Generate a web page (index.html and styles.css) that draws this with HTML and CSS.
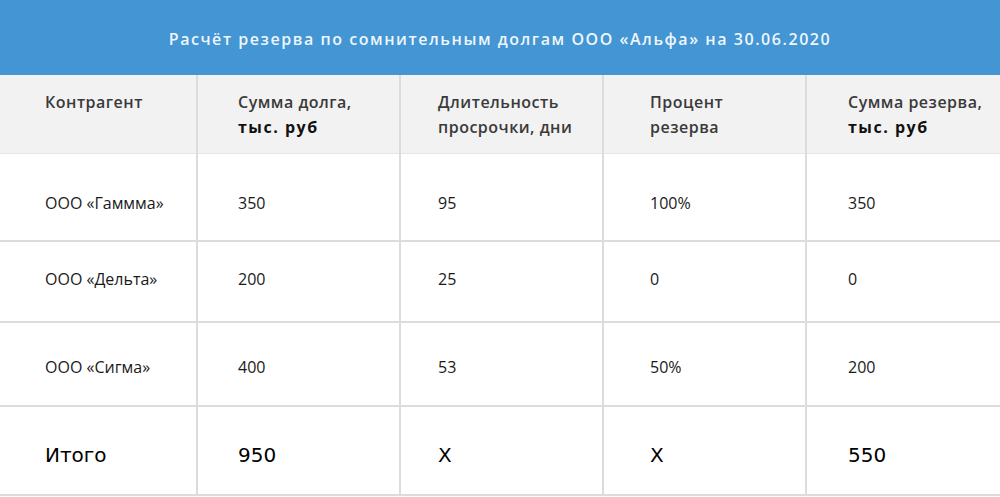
FILE: index.html
```html
<!DOCTYPE html>
<html lang="ru">
<head>
<meta charset="utf-8">
<link rel="stylesheet" href="styles.css">
</head>
<body>
<div class="title">Расчёт резерва по сомнительным долгам ООО «Альфа» на 30.06.2020</div>
<table class="grid">
  <colgroup>
    <col class="c1"><col class="c2"><col class="c3"><col class="c4"><col class="c5">
  </colgroup>
  <thead>
    <tr class="head">
      <th class="p1">Контрагент</th>
      <th class="p2">Сумма долга,<br><span class="unit">тыс. руб</span></th>
      <th class="p3">Длительность<br>просрочки, дни</th>
      <th class="p4">Процент<br>резерва</th>
      <th class="p5">Сумма резерва,<br><span class="unit">тыс. руб</span></th>
    </tr>
  </thead>
  <tbody>
    <tr class="r1">
      <td class="p1">ООО «Гаммма»</td><td class="p2">350</td><td class="p3">95</td><td class="p4">100%</td><td class="p5">350</td>
    </tr>
    <tr class="r2">
      <td class="p1">ООО «Дельта»</td><td class="p2">200</td><td class="p3">25</td><td class="p4">0</td><td class="p5">0</td>
    </tr>
    <tr class="r3">
      <td class="p1">ООО «Сигма»</td><td class="p2">400</td><td class="p3">53</td><td class="p4">50%</td><td class="p5">200</td>
    </tr>
    <tr class="total">
      <td class="p1">Итого</td><td class="p2">950</td><td class="p3">X</td><td class="p4">X</td><td class="p5">550</td>
    </tr>
  </tbody>
</table>
</body>
</html>
```
FILE: styles.css
```css
html, body {
  margin: 0;
  padding: 0;
  background: #ffffff;
}
body {
  font-family: "Open Sans", "Noto Sans", sans-serif;
  width: 1000px;
  overflow: hidden;
}
.title {
  height: 75px;
  background: #4395d3;
  color: #eef6fc;
  font-size: 16px;
  font-weight: 600;
  letter-spacing: 1.55px;
  text-align: center;
  line-height: 78px;
}
.grid {
  width: 1000px;
  border-collapse: collapse;
  table-layout: fixed;
}
.c1 { width: 197px; }
.c2 { width: 203px; }
.c3 { width: 203px; }
.c4 { width: 203px; }
.c5 { width: 194px; }
.grid th, .grid td {
  text-align: left;
  padding-top: 0;
  padding-bottom: 0;
  padding-right: 0;
  border-left: 2px solid #dcdcdc;
  border-bottom: 2px solid #dcdcdc;
}
.grid th:first-child, .grid td:first-child {
  border-left: none;
}
.p1 { padding-left: 45px; }
.p2 { padding-left: 40px; }
.p3 { padding-left: 37px; }
.p4 { padding-left: 46px; }
.p5 { padding-left: 41px; }
.head th {
  background: #f2f2f2;
  height: 78px;
  vertical-align: top;
  padding-top: 15px;
  box-sizing: border-box;
  font-size: 16px;
  font-weight: 600;
  letter-spacing: 0.5px;
  line-height: 25px;
  color: #3a3a3a;
  border-bottom-width: 1px;
  border-bottom-color: #e6e6e6;
}
.head th .unit {
  color: #111111;
  font-weight: 700;
  letter-spacing: 1.5px;
}
.grid td {
  font-size: 16px;
  color: #1a1a1a;
  vertical-align: middle;
}
.r1 td { height: 88px; padding-top: 12px; box-sizing: border-box; }
.r2 td { height: 81px; padding-bottom: 6px; box-sizing: border-box; }
.r3 td { height: 84px; padding-top: 6px; box-sizing: border-box; }
.total td {
  height: 89px;
  padding-top: 8px;
  box-sizing: border-box;
  font-family: "DejaVu Sans", Verdana, sans-serif;
  font-size: 20px;
  color: #000000;
}
```
